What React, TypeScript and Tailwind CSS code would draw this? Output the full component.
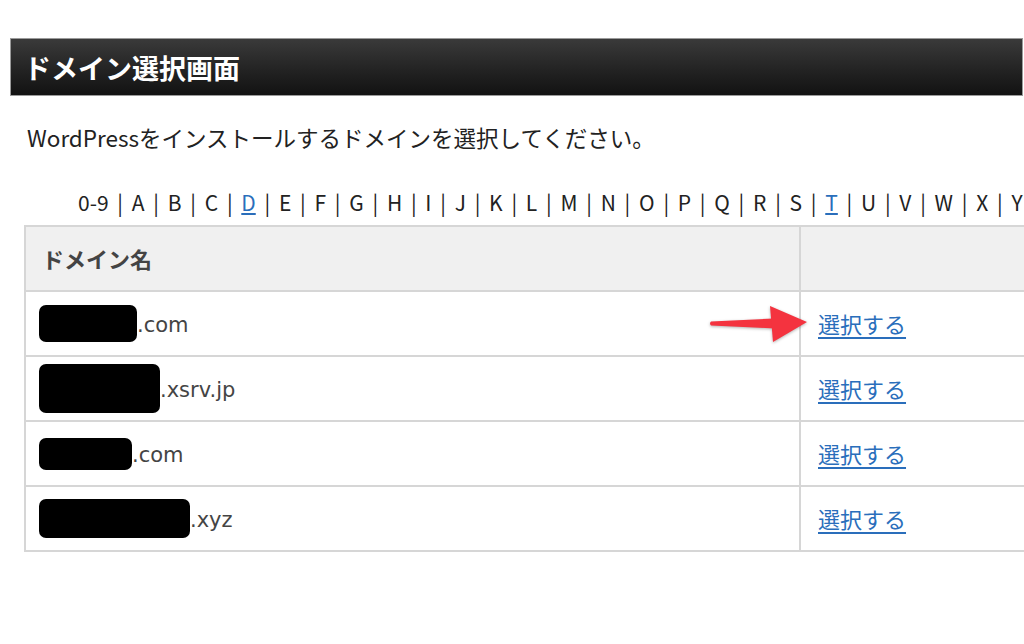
const letters = ["0-9", "A", "B", "C", "D", "E", "F", "G", "H", "I", "J", "K", "L", "M", "N", "O", "P", "Q", "R", "S", "T", "U", "V", "W", "X", "Y", "Z"];
const linked = ["D", "T"];

const rows = [
  { mask: "w-[98px] h-[37px]", suffix: ".com" },
  { mask: "w-[121px] h-[49px]", suffix: ".xsrv.jp" },
  { mask: "w-[93px] h-[32px]", suffix: ".com" },
  { mask: "w-[151px] h-[39px]", suffix: ".xyz" },
];

function Arrow() {
  return (
    <svg width="100" height="40" viewBox="0 0 100 40" className="absolute left-[-110px] top-1/2 -translate-y-1/2 drop-shadow-[0_1px_1.5px_rgba(0,0,0,0.3)]">
      <path d="M3 17.5 L66 14.5 L67 24.5 L3 21.5 Q1 19.5 3 17.5 Z" fill="#f4333f" />
      <path d="M62 2 L99 18 L65 38 Z" fill="#f4333f" />
    </svg>
  );
}

export default function App() {
  return (
    <div className="w-[1024px] h-[644px] overflow-hidden bg-white font-['Noto_Sans_CJK_JP',sans-serif] text-[#222]">
      <div className="pt-[38px] pl-[10px] pr-[1px]">
        <div className="h-[58px] border border-[#9a9a9a] bg-gradient-to-b from-[#3a3a3a] to-[#121212] flex items-center pl-[13px]">
          <h1 className="text-white text-[27px] font-bold leading-none">ドメイン選択画面</h1>
        </div>
      </div>

      <p className="mt-[26px] ml-[27px] text-[22.5px] leading-[30px] whitespace-nowrap">WordPressをインストールするドメインを選択してください。</p>

      <div className="mt-[35px] ml-[78px] w-[1100px] whitespace-nowrap text-[21px] leading-[30px]">
        {letters.map((l, i) => (
          <span key={l}>
            {i > 0 && <span className="px-[8.75px]">|</span>}
            {linked.includes(l) ? <a className="text-[#2a6ebb] underline underline-offset-2">{l}</a> : l}
          </span>
        ))}
      </div>

      <div className="mt-[8px] ml-[24px]">
        <table className="w-[1100px] border-collapse">
          <thead>
            <tr className="h-[65px] bg-[#f0f0f0]">
              <th className="w-[775px] border-2 border-[#d6d6d6] text-left pl-[16px] text-[22px] font-bold text-[#444]">ドメイン名</th>
              <th className="border-2 border-[#d6d6d6]"></th>
            </tr>
          </thead>
          <tbody>
            {rows.map((r, i) => (
              <tr key={i} className="h-[65px]">
                <td className="border-2 border-[#d6d6d6] pl-[13px]">
                  <div className="flex items-center">
                    <span className={`${r.mask} rounded-[7px] bg-black`}></span>
                    <span className="pt-[4px] font-['DejaVu_Sans',sans-serif] text-[21px] text-[#444] leading-none">{r.suffix}</span>
                  </div>
                </td>
                <td className="border-2 border-[#d6d6d6] pl-[17px]">
                  <div className="relative inline-block">
                    {i === 0 && <Arrow />}
                    <a className="text-[22px] text-[#2a6ebb] underline underline-offset-[4px] decoration-[1.5px]">選択する</a>
                  </div>
                </td>
              </tr>
            ))}
          </tbody>
        </table>
      </div>
    </div>
  );
}
